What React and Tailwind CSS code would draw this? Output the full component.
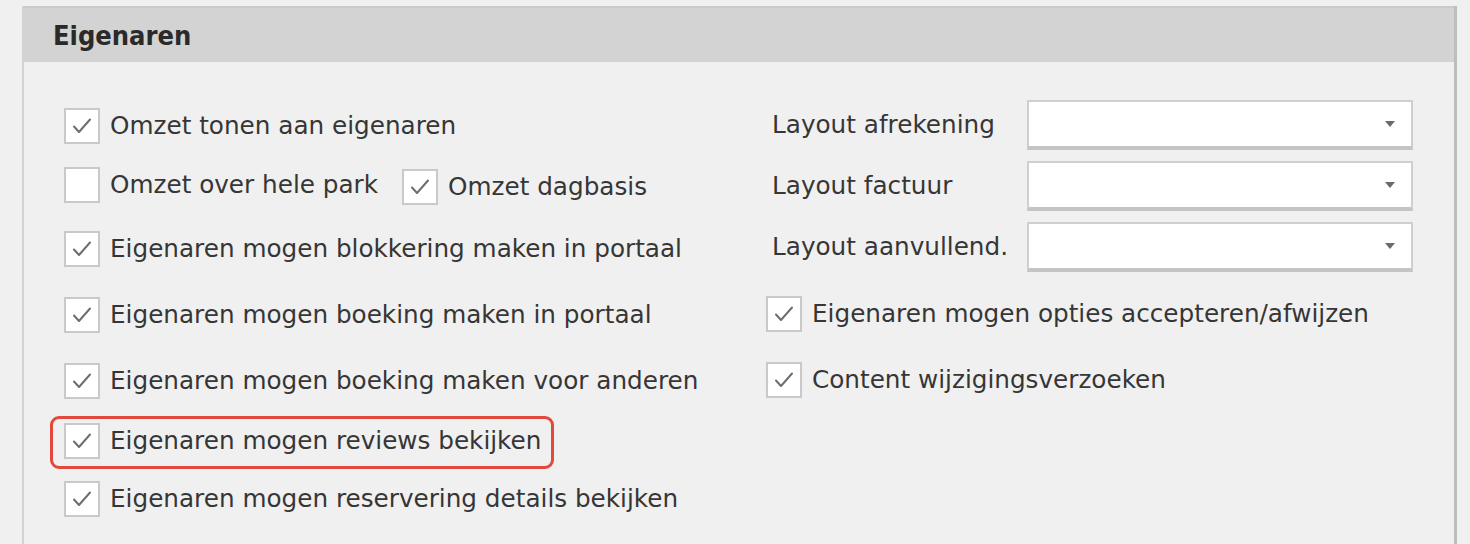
import React from 'react';

const font = { fontFamily: '"DejaVu Sans", sans-serif' };

const Check = ({ checked }) => (
  <span className="flex h-[36px] w-[36px] shrink-0 items-center justify-center border-2 border-[#c9c9c9] bg-white">
    {checked && (
      <svg width="22" height="18" viewBox="0 0 22 18" fill="none">
        <path d="M3 9.5 L8 15 L19 2.5" stroke="#6e6e6e" strokeWidth="2" strokeLinecap="round" strokeLinejoin="round" />
      </svg>
    )}
  </span>
);

const CheckRow = ({ checked = true, label, className = '' }) => (
  <div className={`flex items-center gap-[10px] ${className}`}>
    <Check checked={checked} />
    <span className="whitespace-nowrap">{label}</span>
  </div>
);

const Combo = ({ label }) => (
  <div className="flex h-[50px] items-center">
    <span className="w-[255px] shrink-0 whitespace-nowrap">{label}</span>
    <div className="flex h-[50px] w-[386px] items-center justify-end border-2 border-[#cfcfcf] border-b-[4px] border-b-[#c4c4c4] bg-white pr-[16px]">
      <svg width="10" height="6" viewBox="0 0 10 6">
        <path d="M0 0 H10 L5 6 Z" fill="#6a6a6a" />
      </svg>
    </div>
  </div>
);

export default function App() {
  return (
    <div className="h-[544px] w-[1470px] overflow-hidden bg-[#f0f0f0] pl-[22px] pr-[13px] pt-[6px] text-[24.7px] leading-none text-[#363636]" style={font}>
      <div className="h-[600px] border-l-2 border-r-[3px] border-l-[#d2d2d2] border-r-[#bdbdbd]">
        <div className="flex h-[56px] items-center border-t-2 border-[#cacaca] bg-[#d3d3d3] pl-[29px] text-[27px] font-bold text-[#2a2a2a]" style={{ fontFamily: '"DejaVu Sans Condensed", "DejaVu Sans", sans-serif' }}>
          Eigenaren
        </div>
        <div className="flex pl-[40px]">
          {/* left column */}
          <div className="flex w-[702px] flex-col pt-[46px]">
            <CheckRow label="Omzet tonen aan eigenaren" />
            <div className="mt-[23px] flex items-start">
              <CheckRow checked={false} label="Omzet over hele park" />
              <CheckRow label="Omzet dagbasis" className="ml-[24px] mt-[2px]" />
            </div>
            <CheckRow label="Eigenaren mogen blokkering maken in portaal" className="mt-[26px]" />
            <CheckRow label="Eigenaren mogen boeking maken in portaal" className="mt-[30px]" />
            <CheckRow label="Eigenaren mogen boeking maken voor anderen" className="mt-[30px]" />
            <div className="relative mt-[24px]">
              <CheckRow label="Eigenaren mogen reviews bekijken" />
              <div className="absolute left-[-14px] top-[-7px] h-[53px] w-[504px] rounded-[9px] border-[3px] border-[#e2493b]" />
            </div>
            <CheckRow label="Eigenaren mogen reservering details bekijken" className="mt-[22px]" />
          </div>
          {/* right column */}
          <div className="flex flex-col pt-[38px]">
            <div className="flex flex-col gap-[11px] pl-[6px]">
              <Combo label="Layout afrekening" />
              <Combo label="Layout factuur" />
              <Combo label="Layout aanvullend." />
            </div>
            <CheckRow label="Eigenaren mogen opties accepteren/afwijzen" className="mt-[24px]" />
            <CheckRow label="Content wijzigingsverzoeken" className="mt-[30px]" />
          </div>
        </div>
      </div>
    </div>
  );
}
